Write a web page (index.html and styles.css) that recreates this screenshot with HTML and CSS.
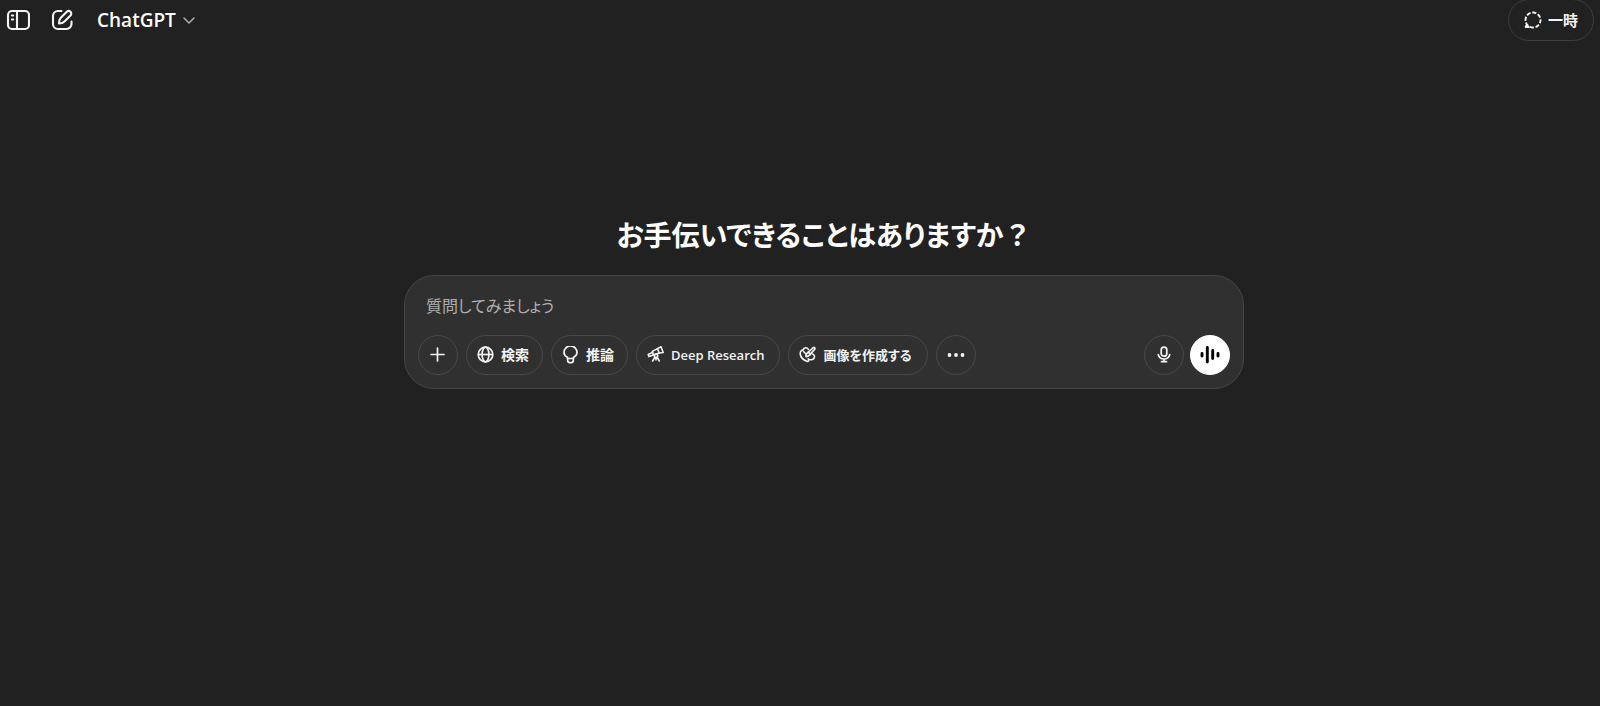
FILE: index.html
```
<!DOCTYPE html>
<html lang="ja">
<head>
    <meta charset="utf-8">
    <meta name="viewport" content="width=device-width, initial-scale=1">
    <title>ChatGPT</title>
    <link rel="stylesheet" href="styles.css">
</head>
<body>
    <header class="topbar">
        <button type="button" class="icon-button" aria-label="サイドバーを開く">
            <svg width="24" height="24" viewBox="0 0 24 24" fill="none" stroke="currentColor" stroke-width="2.100" stroke-linecap="round">
                <rect x="2" y="3" width="21" height="18" rx="4"/>
                <path d="M11 3v18"/>
                <path d="M5.800 7.500h1.400M5.800 11.500h1.400" stroke-width="2"/>
            </svg>
        </button>
        <button type="button" class="icon-button" aria-label="新しいチャット">
            <svg width="24" height="24" viewBox="0 0 24 24" fill="none" stroke="currentColor" stroke-width="2.100" stroke-linecap="round" stroke-linejoin="round">
                <path d="M11.500 3H8a5 5 0 0 0-5 5v8a5 5 0 0 0 5 5h8.500a5 5 0 0 0 5-5v-2.500"/>
                <path d="M9 15.500c0-3.200.5-4.500 1.800-5.800l6-5.900a2.600 2.600 0 0 1 3.700 3.700l-6 6C13.200 14.800 12 15.500 9 15.500z"/>
            </svg>
        </button>
        <button type="button" class="model-button">
            ChatGPT
            <svg width="14" height="14" viewBox="0 0 14 14" fill="none" stroke="currentColor" stroke-width="1.500" stroke-linecap="round" stroke-linejoin="round">
                <path d="M2 5l5 5 5-5"/>
            </svg>
        </button>
        <button type="button" class="pill temporary">
            <svg width="18" height="18" viewBox="0 0 18 18" fill="none" stroke="currentColor" stroke-width="1.900">
                <circle cx="9" cy="9" r="7.500" stroke-dasharray="4.200 1.690" stroke-dashoffset="1"/>
                <path d="M5.500 16H1.700l1.500-3" stroke-linejoin="round"/>
            </svg>
            一時
        </button>
    </header>

    <main class="main">
        <h1 class="heading">お手伝いできることはありますか<span class="full-width">？</span></h1>

        <form class="composer">
            <input type="text" class="prompt" placeholder="質問してみましょう" aria-label="質問してみましょう">
            <div class="tools">
                <button type="button" class="pill round" aria-label="追加">
                    <svg width="18" height="18" viewBox="0 0 18 18" fill="none" stroke="currentColor" stroke-width="1.700" stroke-linecap="round">
                        <path d="M8.500 2v13M2 8.500h13"/>
                    </svg>
                </button>
                <button type="button" class="pill">
                    <svg width="18" height="18" viewBox="0 0 18 18" fill="none" stroke="currentColor" stroke-width="1.700">
                        <circle cx="8.500" cy="8.500" r="7.300"/>
                        <ellipse cx="8.500" cy="8.500" rx="3.400" ry="7.300"/>
                        <path d="M1.200 8.500h14.600"/>
                    </svg>
                    検索
                </button>
                <button type="button" class="pill">
                    <svg width="18" height="18" viewBox="0 0 18 18" fill="none" stroke="currentColor" stroke-width="1.700" stroke-linejoin="round">
                        <path d="M5.500 12.500v-1.300C3.300 10.200 2 8.500 2 6.400a6.500 6.500 0 0 1 13 0c0 2.100-1.300 3.800-3.500 4.800v1.300z"/>
                        <path d="M5.700 12.500v2a2.200 2.200 0 0 0 2.200 2.200h1.200a2.200 2.200 0 0 0 2.200-2.200v-2"/>
                    </svg>
                    推論
                </button>
                <button type="button" class="pill long">
                    <svg width="18" height="18" viewBox="0 0 18 18" fill="none" stroke="currentColor" stroke-width="1.600" stroke-linecap="round" stroke-linejoin="round">
                        <path d="M10.500 2.600l3.500-1.800 2.200 5.700-4 .5z"/>
                        <path d="M10.500 2.600L5.300 5.400l1.200 3.600 5.700-2"/>
                        <path d="M5.500 6.400L1.200 8.500l.8 2.100 4.200-1.500"/>
                        <circle cx="9" cy="9.800" r="1.700"/>
                        <path d="M7.900 11.200L5.600 15M10.100 11.200l2.200 3.800M9 11.600V14"/>
                    </svg>
                    Deep Research
                </button>
                <button type="button" class="pill long">
                    <svg width="18" height="18" viewBox="0 0 18 18" fill="none" stroke="currentColor" stroke-width="1.600" stroke-linecap="round" stroke-linejoin="round">
                        <path d="M9.500 3.500C7.800.9 4.700 1.400 4.300 3.900 1.900 4.200.9 6 1.300 8.500c.5 3.600 4 5.700 6.600 6.700 1.500.6 2.200-.5 1.700-1.700"/>
                        <path d="M13.500 8c2 .9 2.500 2.500 1.600 4-1.100 1.900-4.200 2.400-6 .9"/>
                        <path d="M7 10.600c-.3-1.900.5-3 1.900-4.100L14 1.800c1.300-1 2.600.3 1.600 1.600l-4.500 5C10.200 9.900 9.100 10.700 7 10.600z"/>
                        <path d="M9 6.400c1.200.3 2 1 2.300 2.200M4.500 5.500L7 8"/>
                    </svg>
                    画像を作成する
                </button>
                <button type="button" class="pill round" aria-label="その他">
                    <svg width="18" height="18" viewBox="0 0 18 18" fill="currentColor">
                        <circle cx="2.500" cy="9" r="1.900"/>
                        <circle cx="9" cy="9" r="1.900"/>
                        <circle cx="15.500" cy="9" r="1.900"/>
                    </svg>
                </button>
                <div class="voice-tools">
                    <button type="button" class="pill round" aria-label="音声入力">
                        <svg width="18" height="18" viewBox="0 0 18 18" fill="none" stroke="currentColor" stroke-width="1.700" stroke-linecap="round">
                            <rect x="6.200" y="1.200" width="5.600" height="9" rx="2.800"/>
                            <path d="M3.300 8.700a5.800 5.300 0 0 0 11.400 0M9 13v2.500M6.500 15.700h5"/>
                        </svg>
                    </button>
                    <button type="button" class="pill round voice" aria-label="音声モード">
                        <svg width="20" height="20" viewBox="0 0 20 20" fill="none" stroke="currentColor" stroke-width="2.900" stroke-linecap="round">
                            <path d="M2 8.500v2.500M7.300 2.500v14.500M12.700 5.500v8M18 8.500v2.500"/>
                        </svg>
                    </button>
                </div>
            </div>
        </form>
    </main>
</body>
</html>
```

FILE: styles.css
```
* {
    box-sizing: border-box;
}

body {
    margin: 0;
    min-height: 100vh;
    background: #212121;
    color: #fff;
    font-family: "Open Sans", "Noto Sans CJK JP", sans-serif;
    font-feature-settings: "palt";
}

button,
input {
    margin: 0;
    padding: 0;
    border: 0;
    background: none;
    color: inherit;
    font: inherit;
    font-feature-settings: inherit;
}

button {
    cursor: pointer;
}

svg {
    display: block;
    flex: none;
}

/* top bar */
.topbar {
    display: flex;
    align-items: center;
    gap: 20px;
    height: 40px;
    padding: 0 6px;
}

.icon-button {
    color: #f3f3f3;
}

.model-button {
    display: flex;
    align-items: center;
    gap: 6px;
    margin-left: 3px;
    font-size: 19px;
    font-weight: 600;
    line-height: 28px;
}

.model-button svg {
    color: #afafaf;
}

/* rounded outline buttons */
.pill {
    display: flex;
    align-items: center;
    justify-content: center;
    gap: 6px;
    height: 40px;
    padding: 0 13px 0 10px;
    border: 1px solid #484848;
    border-radius: 21px;
    color: #f3f3f3;
    font-size: 14px;
    font-weight: 600;
    line-height: 20px;
    white-space: nowrap;
}

.long {
    padding-right: 15px;
    font-size: 13px;
}

.round {
    width: 40px;
    padding: 0;
}

.temporary {
    height: 42px;
    margin-left: auto;
    padding: 0 15px;
    border-color: #3e3e3e;
    font-size: 15px;
}

/* centre column, shifted by the collapsed sidebar */
.main {
    padding: 173px 0 0 48px;
}

.heading {
    margin: 0 0 18px;
    font-size: 28px;
    font-weight: 600;
    line-height: 44px;
    text-align: center;
}

.full-width {
    font-feature-settings: normal;
}

.composer {
    width: 100%;
    max-width: 840px;
    margin: 0 auto;
    padding: 16px 13px 13px;
    border: 1px solid #454545;
    border-radius: 30px;
    background: #303030;
}

.prompt {
    display: block;
    width: 100%;
    height: 28px;
    margin-bottom: 15px;
    padding: 0 8px;
    font-size: 16px;
    outline: none;
}

.prompt::placeholder {
    color: #afafaf;
    opacity: 1;
}

.tools {
    display: flex;
    gap: 8px;
}

.voice-tools {
    display: flex;
    gap: 6px;
    margin-left: auto;
}

.voice {
    border-color: #fff;
    background: #fff;
    color: #000;
}
```
